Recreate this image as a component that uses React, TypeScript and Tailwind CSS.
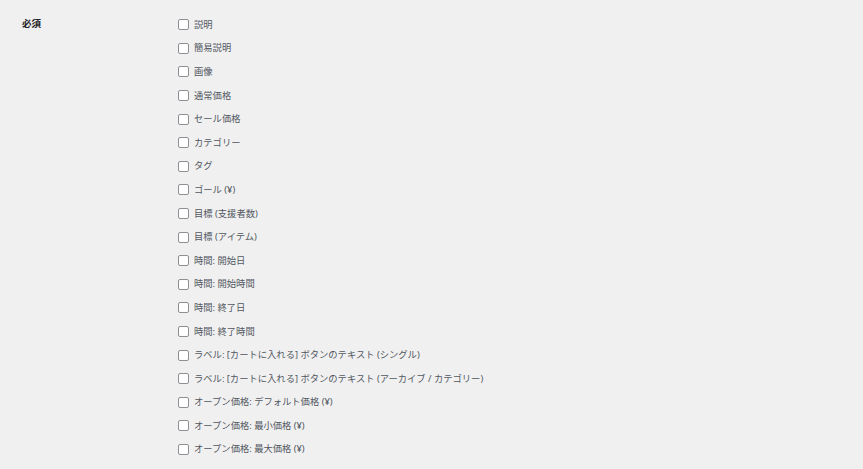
import React from "react";

const items = [
  "説明",
  "簡易説明",
  "画像",
  "通常価格",
  "セール価格",
  "カテゴリー",
  "タグ",
  "ゴール (¥)",
  "目標 (支援者数)",
  "目標 (アイテム)",
  "時間: 開始日",
  "時間: 開始時間",
  "時間: 終了日",
  "時間: 終了時間",
  "ラベル: [カートに入れる] ボタンのテキスト (シングル)",
  "ラベル: [カートに入れる] ボタンのテキスト (アーカイブ / カテゴリー)",
  "オープン価格: デフォルト価格 (¥)",
  "オープン価格: 最小価格 (¥)",
  "オープン価格: 最大価格 (¥)",
];

export default function App() {
  return (
    <div
      className="w-[863px] h-[469px] bg-[#f0f0f1] overflow-hidden flex"
      style={{ fontFamily: '"Noto Sans", "Noto Sans CJK JP", sans-serif' }}
    >
      <div className="w-[178px] pl-[22px] pt-[18px] shrink-0 text-[9.5px] font-bold text-[#1d2327] leading-[12px]">
        必須
      </div>
      <div className="flex flex-col pt-[13px]">
        {items.map((t) => (
          <label key={t} className="h-[23.6px] flex items-center">
            <span className="w-[11px] h-[11px] border border-[#8c8f94] rounded-[2px] bg-white shrink-0" />
            <span className="ml-[5px] text-[9.3px] text-[#50575e] leading-[12px] whitespace-nowrap">{t}</span>
          </label>
        ))}
      </div>
    </div>
  );
}
